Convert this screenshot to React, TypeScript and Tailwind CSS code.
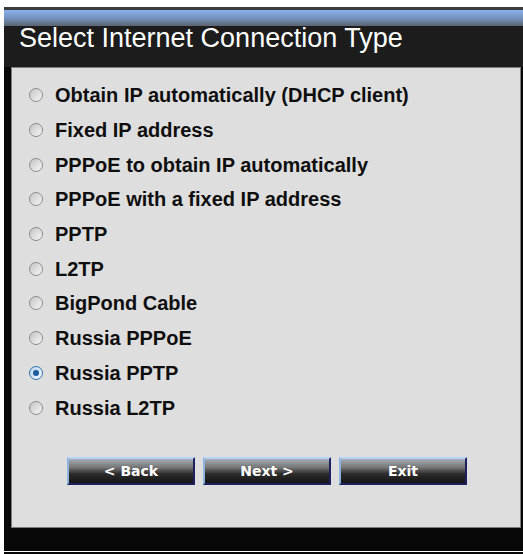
import React, { useState } from "react";

const options = [
  "Obtain IP automatically (DHCP client)",
  "Fixed IP address",
  "PPPoE to obtain IP automatically",
  "PPPoE with a fixed IP address",
  "PPTP",
  "L2TP",
  "BigPond Cable",
  "Russia PPPoE",
  "Russia PPTP",
  "Russia L2TP",
];

function Radio({ checked }: { checked: boolean }) {
  return (
    <span
      className={
        checked
          ? "shrink-0 flex items-center justify-center w-[14px] h-[14px] rounded-full border border-[#2f72b0] bg-[linear-gradient(135deg,#b9d3ec,#f4f9ff)]"
          : "shrink-0 flex items-center justify-center w-[14px] h-[14px] rounded-full border border-[#8c8c8c] bg-[linear-gradient(135deg,#c4c4c4,#f7f7f7)]"
      }
    >
      {checked && (
        <span className="w-[6px] h-[6px] rounded-full bg-[#1a5c9c]" />
      )}
    </span>
  );
}

function WizButton({ label }: { label: string }) {
  return (
    <button
      type="button"
      className="w-[128px] h-[28px] border-2 border-t-[#b4d2f4] border-l-[#8fb4e2] border-r-[#1b2160] border-b-[#1b2160] bg-[linear-gradient(to_bottom,#a4acb4_0%,#767676_35%,#2c2c2c_62%,#141414_100%)] text-white font-bold text-[14px] leading-none font-['DejaVu_Sans',sans-serif]"
    >
      {label}
    </button>
  );
}

export default function App() {
  const [selected, setSelected] = useState(8);

  return (
    <div className="w-[523px] h-[554px] bg-white flex flex-col font-['Liberation_Sans',Arial,sans-serif]">
      <div className="mt-[7px] ml-[4px] w-[519px] h-[544px] bg-[#080808] flex flex-col">
        <div className="h-[3px] bg-[#383b39]" />
        <div className="h-[16px] bg-[linear-gradient(to_bottom,#8ab2ec_0%,#7592c0_50%,#5c6470_100%)]" />
        <div className="h-[41px] bg-[#1c1c1c] pl-[15px]">
          <h1 className="text-white text-[27px] leading-[24px] font-normal whitespace-nowrap">
            Select Internet Connection Type
          </h1>
        </div>
        <div className="ml-[7px] w-[510px] h-[461px] bg-[#dedede] border border-[#7c7c7c] flex flex-col">
          <div className="pt-[10px] pl-[17px] flex flex-col">
            {options.map((opt, i) => (
              <label
                key={opt}
                className="h-[34.7px] flex items-center gap-[12px] cursor-pointer"
                onClick={() => setSelected(i)}
              >
                <Radio checked={selected === i} />
                <span className="text-[20px] font-bold text-[#0e0e0e] whitespace-nowrap">
                  {opt}
                </span>
              </label>
            ))}
          </div>
          <div className="mt-[32px] flex justify-center gap-[8px] pl-[2px]">
            <WizButton label="< Back" />
            <WizButton label="Next >" />
            <WizButton label="Exit" />
          </div>
        </div>
      </div>
      <div className="ml-[4px] h-[1px] bg-white" />
      <div className="ml-[4px] flex-1 bg-[#080808]" />
    </div>
  );
}
